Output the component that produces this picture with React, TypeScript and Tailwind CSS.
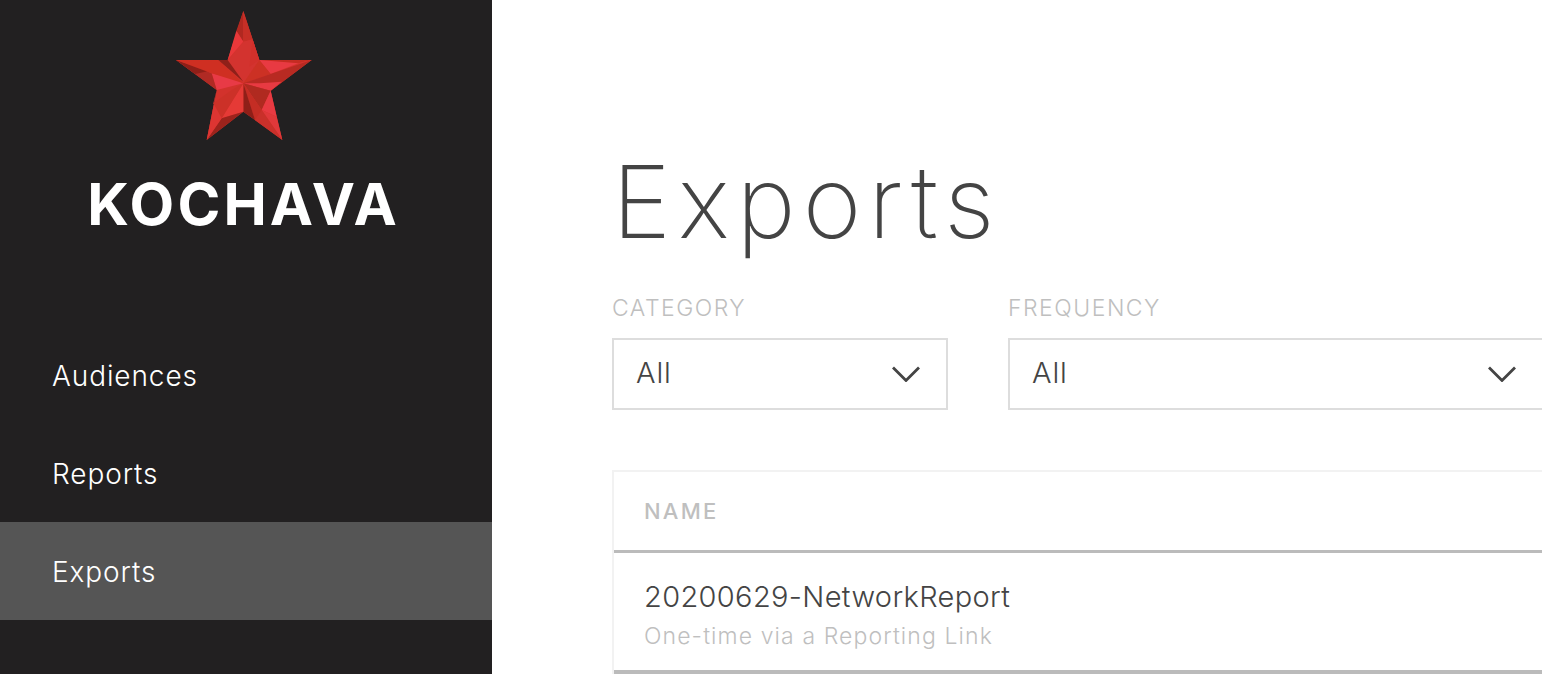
const StarLogo = () => (
  <svg viewBox="0 0 510 450" className="h-[150px] w-[170px]">
    <polygon points="250,33 298,180 455,180 332,272 367,420 250,335 140,420 170,270 48,180 203,180" fill="#d2322c" />
    {/* top point */}
    <polygon points="250,33 229,92 250,125" fill="#b02820" />
    <polygon points="250,33 250,125 278,118" fill="#c62f26" />
    <polygon points="229,92 203,180 250,125" fill="#e8383a" />
    <polygon points="250,125 203,180 250,250 298,180 278,118" fill="#d3332f" />
    <polygon points="278,118 298,180 268,200" fill="#d2302b" />
    {/* right point */}
    <polygon points="298,180 455,180 415,190 332,222" fill="#e83a42" />
    <polygon points="298,180 332,222 250,250" fill="#cc3124" />
    <polygon points="415,190 455,180 298,180" fill="#c52c22" />
    <polygon points="455,180 332,272 250,250 332,222" fill="#b82a22" />
    <polygon points="250,250 332,272 365,245 300,250" fill="#e83a42" />
    {/* lower right point */}
    <polygon points="250,250 332,272 327,282 305,330 252,252" fill="#b02a20" />
    <polygon points="332,272 350,350 305,330" fill="#e83a42" />
    <polygon points="305,330 350,350 367,420" fill="#e0383a" />
    <polygon points="305,330 367,420 285,360" fill="#c9302a" />
    <polygon points="250,250 305,330 285,360" fill="#c42d24" />
    <polygon points="250,250 285,360 250,335" fill="#8f1f18" />
    {/* lower left point */}
    <polygon points="250,250 250,335 185,355" fill="#e53a36" />
    <polygon points="250,250 185,355 160,310 215,270" fill="#cc3128" />
    <polygon points="250,335 185,355 140,420" fill="#9c231c" />
    <polygon points="185,355 140,420 170,270 160,310" fill="#dd3532" />
    {/* left point */}
    <polygon points="250,250 170,270 155,220 215,235" fill="#e83a46" />
    <polygon points="48,180 155,220 170,270 105,222" fill="#b02a24" />
    <polygon points="48,180 150,212 105,222" fill="#8f1f18" />
    <polygon points="48,180 203,180 175,180 250,250 155,220" fill="#cf2f22" />
    <polygon points="175,180 203,180 250,245" fill="#8f2019" />
  </svg>
);

const Chevron = () => (
  <svg viewBox="0 0 28 16" className="h-4 w-7" fill="none" stroke="#444444" strokeWidth="2.8">
    <path d="M1 1.5 14 14.5 27 1.5" />
  </svg>
);

const NavItem = ({ label, active }: { label: string; active?: boolean }) => (
  <div
    className={`flex h-[98px] items-center pt-[1px] pl-[52px] text-[28px] font-light tracking-[0.9px] text-white ${
      active ? "bg-[#555555]" : ""
    }`}
  >
    {label}
  </div>
);

const Filter = ({ label, width }: { label: string; width: string }) => (
  <div className={`flex shrink-0 flex-col ${width}`}>
    <div className="mb-[15px] h-[30px] text-[23px] leading-[30px] font-light tracking-[1.5px] text-[#bfbfbf]">{label}</div>
    <div className="flex h-[72px] items-center justify-between border-2 border-[#dddddd] pr-[26px] pl-[22px] text-[29px] leading-[36px] font-light tracking-[0.9px] text-[#444444]">
      <span className="mt-[-2px]">All</span>
      <Chevron />
    </div>
  </div>
);

export default function App() {
  return (
    <div className="flex h-[674px] w-[1542px] overflow-hidden bg-white font-['Inter',sans-serif]">
      <aside className="flex w-[492px] shrink-0 flex-col bg-[#222021]">
        <div className="flex h-[326px] flex-col items-center">
          <div className="pr-[2px]">
            <StarLogo />
          </div>
          <div className="mt-[19px] pr-[5px] text-[58px] leading-[70px] font-bold tracking-[3.1px] text-white">KOCHAVA</div>
        </div>
        <NavItem label="Audiences" />
        <NavItem label="Reports" />
        <NavItem label="Exports" active />
      </aside>

      <main className="min-w-0 flex-1 pl-[120px]">
        <h1 className="mt-[134px] mb-[2px] h-[157px] text-[100px] leading-[136px] font-extralight tracking-[7px] text-[#444444]">Exports</h1>
        <div className="flex gap-[60px]">
          <Filter label="CATEGORY" width="w-[336px]" />
          <Filter label="FREQUENCY" width="w-[536px]" />
        </div>
        <div className="mt-[60px] w-[1000px] border-2 border-b-0 border-[#f2f2f2]">
          <div className="flex h-[81px] items-center border-b-[3px] border-[#bbbbbb] pt-[1px] pl-[30px] text-[22px] font-medium tracking-[2.2px] text-[#bfbfbf]">
            NAME
          </div>
          <div className="h-[121px] border-b-4 border-[#bbbbbb] pt-[27px] pl-[30px]">
            <div className="text-[29px] leading-[34px] font-light tracking-[0.35px] text-[#444444]">20200629-NetworkReport</div>
            <div className="mt-[7px] text-[23px] leading-[30px] font-light tracking-[1.1px] text-[#bfbfbf]">One-time via a Reporting Link</div>
          </div>
        </div>
      </main>
    </div>
  );
}
